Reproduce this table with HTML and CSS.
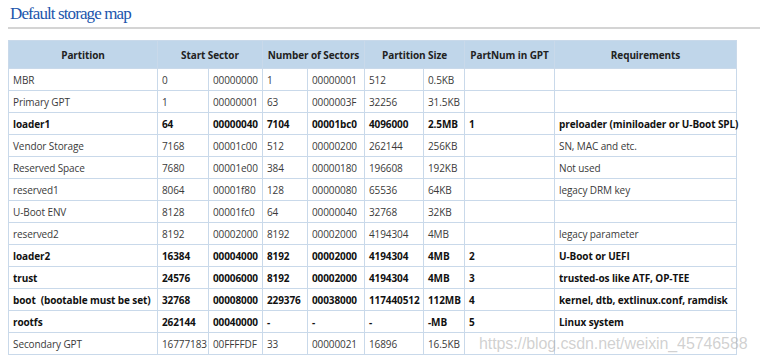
FILE: index.html
```html
<!DOCTYPE html>
<html>
<head>
<meta charset="utf-8">
<link rel="stylesheet" href="styles.css">
</head>
<body>
<h2 class="title">Default storage map</h2>
<table class="map">
<colgroup>
<col class="c1"><col class="c2"><col class="c3"><col class="c4"><col class="c5"><col class="c6"><col class="c7"><col class="c8"><col class="c9">
</colgroup>
<thead>
<tr><th>Partition</th><th colspan="2">Start Sector</th><th colspan="2">Number of Sectors</th><th colspan="2">Partition Size</th><th>PartNum in GPT</th><th>Requirements</th></tr>
</thead>
<tbody>
<tr><td>MBR</td><td>0</td><td>00000000</td><td>1</td><td>00000001</td><td>512</td><td>0.5KB</td><td></td><td></td></tr>
<tr><td>Primary GPT</td><td>1</td><td>00000001</td><td>63</td><td>0000003F</td><td>32256</td><td>31.5KB</td><td></td><td></td></tr>
<tr class="b"><td>loader1</td><td>64</td><td>00000040</td><td>7104</td><td>00001bc0</td><td>4096000</td><td>2.5MB</td><td>1</td><td>preloader (miniloader or U-Boot SPL)</td></tr>
<tr><td>Vendor Storage</td><td>7168</td><td>00001c00</td><td>512</td><td>00000200</td><td>262144</td><td>256KB</td><td></td><td>SN, MAC and etc.</td></tr>
<tr><td>Reserved Space</td><td>7680</td><td>00001e00</td><td>384</td><td>00000180</td><td>196608</td><td>192KB</td><td></td><td>Not used</td></tr>
<tr><td>reserved1</td><td>8064</td><td>00001f80</td><td>128</td><td>00000080</td><td>65536</td><td>64KB</td><td></td><td>legacy DRM key</td></tr>
<tr><td>U-Boot ENV</td><td>8128</td><td>00001fc0</td><td>64</td><td>00000040</td><td>32768</td><td>32KB</td><td></td><td></td></tr>
<tr><td>reserved2</td><td>8192</td><td>00002000</td><td>8192</td><td>00002000</td><td>4194304</td><td>4MB</td><td></td><td>legacy parameter</td></tr>
<tr class="b"><td>loader2</td><td>16384</td><td>00004000</td><td>8192</td><td>00002000</td><td>4194304</td><td>4MB</td><td>2</td><td>U-Boot or UEFI</td></tr>
<tr class="b"><td>trust</td><td>24576</td><td>00006000</td><td>8192</td><td>00002000</td><td>4194304</td><td>4MB</td><td>3</td><td>trusted-os like ATF, OP-TEE</td></tr>
<tr class="b"><td>boot&nbsp; (bootable must be set)</td><td>32768</td><td>00008000</td><td>229376</td><td>00038000</td><td>117440512</td><td>112MB</td><td>4</td><td>kernel, dtb, extlinux.conf, ramdisk</td></tr>
<tr class="b"><td>rootfs</td><td>262144</td><td>00040000</td><td>-</td><td>-</td><td>-</td><td>-MB</td><td>5</td><td>Linux system</td></tr>
<tr><td>Secondary GPT</td><td>16777183</td><td>00FFFFDF</td><td>33</td><td>00000021</td><td>16896</td><td>16.5KB</td><td></td><td class="wm-cell"><span class="wm">https://blog.csdn.net/weixin_45746588</span></td></tr>
</tbody>
</table>
</body>
</html>
```
FILE: styles.css
```css
html, body { margin: 0; padding: 0; background: #fff; }
body { padding: 0 0 0 8px; }
.title {
  margin: 0;
  padding: 4px 0 4px 2px;
  font-family: "Liberation Serif", serif;
  font-weight: normal;
  font-size: 17px;
  letter-spacing: -0.9px;
  line-height: 19px;
  color: #2155ac;
  border-bottom: 2px solid #d4d4d4;
}
.map {
  margin-top: 11px;
  border-collapse: collapse;
  table-layout: fixed;
  width: 729px;
  font-family: "Open Sans", "Noto Sans", sans-serif;
  font-size: 10px;
  letter-spacing: -0.1px;
  color: #3a3a3a;
}
.c1 { width: 149px; } .c2 { width: 51px; } .c3 { width: 54px; }
.c4 { width: 45px; } .c5 { width: 57px; } .c6 { width: 59px; }
.c7 { width: 41px; } .c8 { width: 90px; } .c9 { width: 182px; }
.map th, .map td {
  border: 1px solid #c9d9ea;
  white-space: nowrap;
  overflow: visible;
}
.map th {
  background: #c0d6ea;
  height: 27px;
  padding: 0;
  font-weight: bold;
  color: #222;
  text-align: center;
}
.map td {
  height: 21px;
  padding: 0 0 0 4px;
  text-align: left;
}
.map tr.b td { font-weight: bold; color: #111; }
.wm-cell { position: relative; }
.wm {
  position: absolute;
  left: -76px;
  top: 0;
  font-family: "Liberation Sans", sans-serif;
  font-size: 16px;
  line-height: 22px;
  color: rgba(170, 170, 170, 0.55);
}
```
